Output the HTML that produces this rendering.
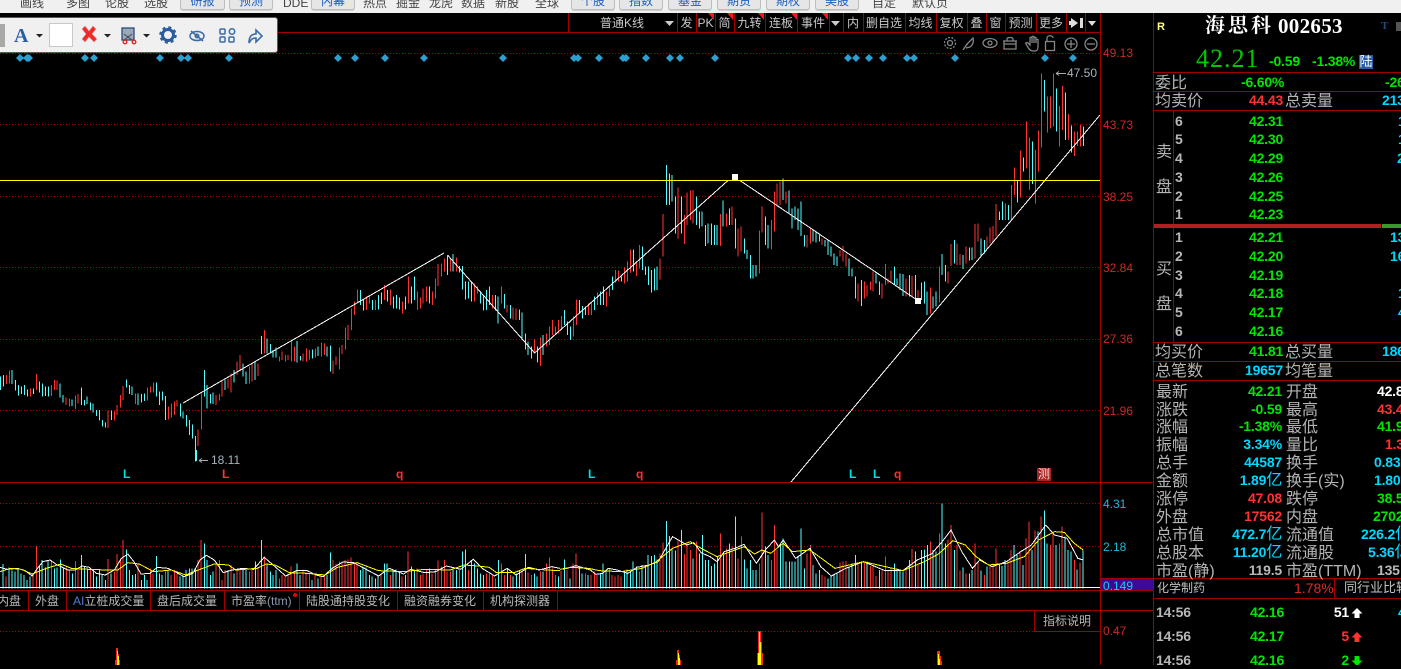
<!DOCTYPE html>
<html lang="zh">
<head>
<meta charset="utf-8">
<title>海思科 002653</title>
<style>
html,body{margin:0;padding:0;background:#000;}
body{position:relative;width:1401px;height:665px;overflow:hidden;font-family:"Liberation Sans","WenQuanYi Zen Hei",sans-serif;}
svg.a{position:absolute;left:0;top:0;}
i{position:absolute;font-style:normal;white-space:pre;}
.n{font:bold 14px/18px "Liberation Sans","WenQuanYi Zen Hei",sans-serif;letter-spacing:-.2px;}
.v{right:119px;}
.w{right:117px;}
.l{font:16px/18px "Liberation Sans","WenQuanYi Zen Hei",sans-serif;color:#b4b4b4;margin-top:2px;}
.n .l{margin-top:0;}
.s{font:12px/18px "Liberation Sans","WenQuanYi Zen Hei",sans-serif;color:#c0c0c0;}
.g{color:#00e600;}.r{color:#ff3232;}.c{color:#00d8ff;}.h{color:#b8b8b8;}.f{color:#fff;}
.y{font:12px/14px "Liberation Sans",sans-serif;color:#d02828;left:1103px;}
.m{font:bold 12px/14px "Liberation Sans",sans-serif;}
.e{font:12px/18px "Liberation Sans","WenQuanYi Zen Hei",sans-serif;color:#c8c8c8;top:14px;text-align:center;}
.b{position:absolute;top:-6px;height:14px;background:#e6e6e6;border:1px solid #bdbdbd;border-radius:3px;box-shadow:0 1px 0 #d0d0d0;font:12px/12px "Liberation Sans","WenQuanYi Zen Hei",sans-serif;color:#1a5fc0;text-align:center;}
.p{position:absolute;top:-3px;font:12px/12px "Liberation Sans","WenQuanYi Zen Hei",sans-serif;color:#444;white-space:pre;}
.tb{font:12px/20px "Liberation Sans","WenQuanYi Zen Hei",sans-serif;color:#b8b8b8;top:591px;}
</style>
</head>
<body>
<svg class="a" width="1401" height="665" viewBox="0 0 1401 665">
<rect x="0" y="13" width="1401" height="652" fill="#000"/>
<g stroke="#a00000" stroke-dasharray="1 2" shape-rendering="crispEdges" stroke-width="1">
<path d="M0 53.5H1100M0 124.5H1100M0 196.5H1100M0 267.5H1100M0 339.5H1100M0 410.5H1100M0 503.5H1100M0 546.5H1100M0 631.5H1100"/>
</g>

<g fill="none" shape-rendering="crispEdges">
<g transform="translate(0,240) scale(.35714,.33333)" stroke-width="2.8">
<path stroke="#ff3232" d="M18 405V432M26 392V430M85 445V470M102 402V450M144 435V468M152 420V450M160 422V450M185 472V495M194 475V500M211 467V507M219 462V490M303 512V564M320 515V542M328 495V525M337 465V503M345 438V480M379 460V492M413 442V482M421 440V458M430 427V458M472 500V538M480 490V533M488 485V525M496 480V500M555 568V618M564 460V568M605 465V495M614 462V482M622 425V470M639 415V445M647 400V458M664 365V405M672 345V395M698 380V430M706 370V425M723 370V408M740 270V340M782 350V365M790 335V360M799 345V365M807 345V360M816 305V365M824 320V365M849 340V365M858 325V365M866 330V358M883 325V352M900 307V350M908 310V345M933 362V402M941 350V375M950 322V388M958 315V342M967 262V328M975 255V300M984 205V270M992 185V225M1001 148V188M1026 170V210M1034 165V190M1051 180V210M1076 135V180M1093 148V195M1127 185V220M1144 110V190M1169 155V210M1177 172V205M1185 145V190M1194 140V185M1211 155V195M1219 115V175M1227 72V138M1236 70V110M1244 55V95M1261 55V95M1278 52V95M1329 130V185M1337 140V160M1379 165V205M1404 140V190M1420 195V218M1437 202V238M1445 205V240M1496 298V340M1513 292V378M1530 280V320M1538 260V315M1547 240V285M1555 260V285M1564 240V280"/>
<path stroke="#55ffff" d="M2 410V450M10 405V440M34 390V432M43 420V452M52 435V467M60 440V462M68 435V465M77 448V470M94 445V462M111 425V458M119 430V470M127 440V468M136 440V470M168 430V472M177 465V488M202 478V498M228 442V495M236 480V497M244 470V492M253 487V510M261 490V518M270 510V528M278 510V542M287 540V560M295 547V562M312 512V540M354 418V442M362 435V462M370 440V465M387 460V495M396 462V488M404 460V483M438 427V470M446 455V495M455 455V482M464 468V540M505 490V530M513 515V535M522 525V560M530 540V585M539 553V595M547 588V665M572 390V470M580 435V505M589 462V490M597 458V492M630 420V450M655 390V428M681 370V410M689 395V432M714 365V420M732 288V342M748 295V340M757 312V340M765 330V352M773 322V352M832 303V368M841 348V362M875 328V355M891 320V348M916 320V350M925 316V395M1009 150V195M1018 178V212M1043 180V210M1060 165V208M1068 158V192M1085 150V185M1102 170V205M1110 165V205M1118 172V208M1135 170V208M1152 140V190M1160 110V180M1202 140V190M1253 48V105M1269 42V95M1286 78V98M1295 78V148M1303 125V178M1312 125V175M1320 125V185M1345 155V190M1354 170V212M1362 150V210M1370 140V195M1387 165V212M1395 170V250M1412 162V205M1429 195V235M1454 208V240M1462 218V300M1471 280V328M1479 305V345M1488 320V355M1505 320V368M1521 285V345"/>
</g>
<g transform="translate(560,150) scale(.35714,.33333)" stroke-width="2.8">
<path stroke="#ff3232" d="M4 498V535M38 500V560M46 448V525M80 460V495M88 455V495M105 428V465M130 425V470M139 410V440M155 360V398M164 362V395M181 353V400M189 335V395M197 298V368M214 335V378M222 285V355M280 325V388M289 192V320M331 113V265M348 195V282M356 128V225M365 122V210M373 120V220M449 192V288M466 190V230M482 170V225M499 235V320M507 230V305M558 242V370M566 170V248M592 210V298M600 125V245M608 100V165M616 95V165M633 125V160M692 255V292M701 235V280M734 265V285M784 300V320M792 288V335M801 310V350M835 400V455M852 395V445M860 405V440M869 395V420M877 365V425M902 400V445M911 342V405M919 385V400M927 362V398M969 385V440M986 378V440M1003 420V445M1037 412V490M1062 350V458M1087 365V400M1095 282V348M1112 280V345M1120 312V345M1137 290V340M1162 222V325M1171 220V275M1196 260V295M1204 232V280M1213 228V280M1221 162V260"/>
<path stroke="#55ffff" d="M12 480V525M21 515V555M29 530V570M54 450V490M63 468V505M71 470V495M96 440V480M113 425V465M122 410V465M147 380V420M172 380V395M206 298V365M231 290V360M239 350V375M248 350V405M256 360V428M264 355V422M272 350V420M298 45V165M306 70V165M314 75V155M323 140V250M340 140V250M382 140V225M390 185V235M398 185V230M407 225V288M415 220V280M424 220V285M432 225V285M440 225V285M457 152V230M474 175V225M491 205V295M516 265V310M524 300V327M533 315V385M541 345V385M549 345V380M575 200V285M583 225V295M625 85V150M641 122V190M650 175V235M658 170V210M667 175V240M675 155V258M684 255V290M709 240V275M717 245V278M726 255V275M742 270V290M750 270V315M759 290V320M767 310V345M775 320V348M809 325V378M818 355V380M827 380V445M844 390V468M885 370V400M894 395V435M936 350V405M944 385V405M952 370V420M961 372V438M978 375V440M995 375V445M1012 398V450M1020 395V460M1028 425V495M1045 440V475M1053 425V470M1070 312V375M1079 345V395M1104 270V340M1129 315V357M1146 293V332M1154 292V330M1179 265V320M1188 270V310"/>
</g>
<g transform="translate(980,60) scale(.33333)" stroke-width="3">
<path stroke="#ff3232" d="M76 430V480M94 375V480M103 323V405M121 272V412M139 185V325M148 232V390M166 270V430M175 212V335M184 40V262M202 110V218M211 110V205M220 40V200M238 138V260M247 78V210M265 162V238M283 215V288M292 215V258M301 195V260"/>
<path stroke="#55ffff" d="M58 455V480M67 425V480M85 435V480M112 362V428M130 292V335M157 245V372M193 60V155M229 85V215M256 97V240M274 197V278M310 200V258"/>
</g>

<!-- volume bars -->
<g transform="translate(0,480) scale(.35714,.33333)" stroke-width="2.8">
<path stroke="#ff3232" d="M17 290V326M93 280V326M102 198V326M144 240V326M186 262V326M194 272V326M211 243V326M219 265V326M253 265V326M303 237V326M320 275V326M328 222V326M337 235V326M345 180V326M387 250V326M421 265V326M429 280V326M463 270V326M479 285V326M488 270V326M496 280V326M555 240V326M563 180V326M605 250V326M614 240V326M622 300V326M630 270V326M647 255V326M664 270V326M672 265V326M698 275V326M706 270V326M723 265V326M740 230V326M782 295V326M790 285V326M798 290V326M807 280V326M815 260V326M824 280V326M849 268V326M857 275V326M866 280V326M882 280V326M899 285V326M908 290V326M933 240V326M941 250V326M950 245V326M958 245V326M966 240V326M975 238V326M983 232V326M992 250V326M1000 255V326M1067 280V326M1093 285V326M1126 290V326M1143 215V326M1168 265V326M1177 285V326M1185 280V326M1194 270V326M1210 280V326M1219 270V326M1227 242V326M1236 260V326M1244 240V326M1252 275V326M1261 275V326M1286 270V326M1312 270V326M1362 280V326M1371 282V326M1379 285V326M1387 295V326M1404 250V326M1412 285V326M1429 285V326M1462 275V326M1479 278V326M1488 285V326M1513 275V326M1530 250V326M1538 232V326M1547 265V326M1555 285V326"/>
<path stroke="#55ffff" d="M8 252V326M25 262V326M34 272V326M42 275V326M50 265V326M59 280V326M67 285V326M76 300V326M84 290V326M110 260V326M118 240V326M127 262V326M135 240V326M152 265V326M160 262V326M169 238V326M178 265V326M203 280V326M228 225V326M236 260V326M245 265V326M262 270V326M270 290V326M278 270V326M286 285V326M295 300V326M311 280V326M354 208V326M362 270V326M371 285V326M379 282V326M396 300V326M404 285V326M412 300V326M438 228V326M446 280V326M454 285V326M471 270V326M504 290V326M513 290V326M521 270V326M530 265V326M538 265V326M547 265V326M572 190V326M580 240V326M589 285V326M597 275V326M639 270V326M655 280V326M681 270V326M689 270V326M715 245V326M732 180V326M748 250V326M757 275V326M765 285V326M773 270V326M832 250V326M840 285V326M874 300V326M891 295V326M916 285V326M925 218V326M1009 270V326M1017 262V326M1025 262V326M1034 285V326M1042 290V326M1051 295V326M1059 288V326M1076 250V326M1084 250V326M1101 268V326M1109 268V326M1118 275V326M1135 285V326M1152 260V326M1160 270V326M1202 265V326M1269 265V326M1278 270V326M1295 215V326M1303 208V326M1320 240V326M1329 250V326M1337 265V326M1346 280V326M1354 285V326M1396 240V326M1421 265V326M1437 290V326M1446 280V326M1454 270V326M1471 222V326M1496 280V326M1504 290V326M1521 275V326M1564 290V326"/>
</g>
<g transform="translate(560,480) scale(.35714,.33333)" stroke-width="2.8">
<path stroke="#ff3232" d="M3 272V326M20 270V326M37 250V326M45 220V326M71 280V326M87 285V326M96 275V326M104 285V326M138 265V326M146 285V326M154 290V326M163 285V326M171 290V326M222 275V326M280 220V326M289 188V326M331 180V326M348 222V326M356 190V326M365 210V326M382 185V326M449 160V326M466 205V326M482 200V326M499 235V326M508 170V326M558 250V326M566 98V326M592 240V326M600 135V326M608 210V326M692 220V326M701 195V326M734 285V326M742 290V326M784 248V326M792 245V326M801 243V326M835 250V326M852 245V326M869 258V326M877 260V326M885 288V326M902 272V326M911 230V326M919 270V326M927 262V326M969 270V326M986 207V326M1003 255V326M1037 185V326M1062 160V326M1087 178V326M1095 135V326M1112 195V326M1120 272V326M1137 280V326M1162 190V326M1171 245V326M1188 285V326M1204 258V326M1213 250V326M1221 205V326M1254 245V326M1263 210V326M1288 215V326M1305 175V326M1313 125V326M1330 152V326M1347 110V326M1373 195V326M1381 160V326M1398 190V326M1406 140V326M1440 240V326M1456 248V326"/>
<path stroke="#55ffff" d="M12 238V326M28 295V326M54 260V326M62 280V326M79 285V326M113 280V326M121 250V326M129 275V326M180 275V326M188 268V326M197 275V326M205 245V326M214 260V326M230 255V326M239 258V326M247 225V326M256 228V326M264 225V326M272 238V326M298 123V326M306 168V326M314 205V326M323 212V326M340 150V326M373 235V326M390 220V326M399 165V326M407 240V326M416 240V326M424 258V326M432 250V326M441 230V326M458 225V326M474 190V326M491 110V326M516 238V326M524 265V326M533 240V326M541 270V326M549 270V326M575 200V326M583 225V326M617 190V326M625 175V326M633 245V326M642 245V326M650 245V326M658 245V326M667 228V326M675 145V326M684 265V326M709 255V326M717 280V326M726 270V326M750 295V326M759 285V326M767 285V326M775 280V326M809 260V326M818 250V326M827 225V326M844 245V326M860 245V326M894 270V326M936 250V326M944 265V326M952 270V326M961 275V326M978 240V326M995 215V326M1012 210V326M1020 208V326M1029 195V326M1045 210V326M1053 215V326M1070 70V326M1079 190V326M1104 210V326M1129 262V326M1146 280V326M1154 270V326M1179 272V326M1196 260V326M1230 250V326M1238 258V326M1246 240V326M1271 195V326M1279 225V326M1296 255V326M1322 210V326M1339 155V326M1356 92V326M1364 190V326M1389 195V326M1414 170V326M1423 210V326M1431 215V326M1448 268V326M1465 212V326"/>
</g>
<path d="M0 587.5H1100" stroke="#fff" stroke-width="1"/>
</g>

<!-- MA lines -->
<g fill="none" stroke-width="1" shape-rendering="crispEdges">
<g transform="translate(0,480) scale(.35714,.33333)">
<polyline vector-effect="non-scaling-stroke" stroke="#fff" points="0,262 20,268 50,265 70,272 90,288 105,265 120,245 140,240 160,255 175,262 190,270 210,270 230,258 250,262 270,280 295,285 320,270 340,235 358,222 375,245 395,282 420,280 440,262 470,265 490,275 515,290 540,280 560,240 578,226 600,240 625,278 650,270 680,265 710,268 740,232 770,260 800,288 830,272 860,272 885,285 905,290 930,265 960,246 990,248 1020,265 1060,288 1090,265 1130,282 1150,268 1190,278 1220,275 1250,258 1290,268 1325,238 1350,265 1385,288 1420,265 1445,285 1480,262 1510,270 1545,260 1568,265"/>
<polyline vector-effect="non-scaling-stroke" stroke="#ffff00" points="0,275 30,265 60,268 90,282 130,265 170,252 200,265 250,268 300,270 330,270 358,248 390,252 430,275 480,270 520,285 550,272 600,252 640,255 660,270 720,265 745,252 770,255 810,278 860,280 910,285 945,262 1000,248 1060,272 1130,275 1190,268 1260,270 1300,255 1340,258 1370,262 1390,278 1440,278 1470,265 1530,270 1568,272"/>
</g>
<g transform="translate(560,480) scale(.35714,.33333)">
<polyline vector-effect="non-scaling-stroke" stroke="#fff" points="0,268 20,265 45,257 85,270 100,283 120,280 135,265 160,270 190,280 215,262 250,255 275,245 315,170 335,182 355,195 375,188 395,218 420,230 440,245 460,215 490,205 515,193 550,250 575,210 600,180 612,200 625,180 660,235 700,205 730,260 760,288 800,265 850,245 910,272 960,272 1000,240 1040,222 1070,185 1095,150 1125,215 1155,265 1175,240 1210,260 1250,245 1290,215 1320,195 1360,135 1385,165 1420,175 1450,235 1465,240"/>
<polyline vector-effect="non-scaling-stroke" stroke="#ffff00" points="0,268 30,262 80,265 110,272 170,275 230,265 270,245 315,205 365,185 395,205 440,230 515,200 545,222 565,210 590,220 625,190 650,215 700,210 770,265 850,245 960,272 1020,245 1060,222 1100,182 1135,195 1165,230 1200,255 1250,250 1300,230 1340,180 1385,155 1412,157 1440,190 1465,210"/>
</g>
</g>

<!-- drawn lines -->
<path d="M183 403L444 253M447.500 255L534.600 353L728 180.500M740 180.500L917 300M791 482L1100 115" fill="none" stroke="#fff" stroke-width="1" shape-rendering="crispEdges"/>
<path d="M0 180.500H1100" stroke="#ffff00" stroke-width="1" shape-rendering="crispEdges"/>
<rect x="732" y="174" width="6" height="6" fill="#fff"/>
<rect x="915" y="298" width="6" height="6" fill="#fff"/>

<!-- diamonds -->
<g fill="#2b9fcf">
<path d="M20 54l4 4-4 4-4-4zM27 54l4 4-4 4-4-4zM29 54l4 4-4 4-4-4zM85 54l4 4-4 4-4-4zM94 54l4 4-4 4-4-4zM160 54l4 4-4 4-4-4zM181 54l4 4-4 4-4-4zM188 54l4 4-4 4-4-4zM229 54l4 4-4 4-4-4zM338 54l4 4-4 4-4-4zM355 54l4 4-4 4-4-4zM385 54l4 4-4 4-4-4zM424 54l4 4-4 4-4-4zM503 54l4 4-4 4-4-4zM574 54l4 4-4 4-4-4zM578 54l4 4-4 4-4-4zM599 54l4 4-4 4-4-4zM623 54l4 4-4 4-4-4zM626 54l4 4-4 4-4-4zM646 54l4 4-4 4-4-4zM670 54l4 4-4 4-4-4zM680 54l4 4-4 4-4-4zM715 54l4 4-4 4-4-4zM848 54l4 4-4 4-4-4zM856 54l4 4-4 4-4-4zM869 54l4 4-4 4-4-4zM883 54l4 4-4 4-4-4zM907 54l4 4-4 4-4-4zM914 54l4 4-4 4-4-4zM955 54l4 4-4 4-4-4zM1045 54l4 4-4 4-4-4zM1073 54l4 4-4 4-4-4z"/>
</g>

<!-- price arrows -->
<path d="M208 460.500H199M199 460.500l3-2M199 460.500l3 2" stroke="#a8a8a8" fill="none"/>
<path d="M196.500 450V461" stroke="#55ffff"/>
<path d="M1066 73.500H1056M1056 73.500l3-2M1056 73.500l3 2" stroke="#a8a8a8" fill="none"/>

<!-- spikes -->
<g shape-rendering="crispEdges">
<path d="M116 648h2v6h1v6h1v5h-5v-5h1zM677 650h2v5h1v5h1v5h-5v-5h1zM758 631h3v11h1v11h1v12h-6v-12h1z" fill="#ff2020"/>
<path d="M937 651h3v5h1v5h1v4h-5v-4h0z" fill="#ff2020"/>
<path d="M117 651h1v5h1v9h-2zM678 653h1v5h1v7h-2zM759 632h1v10h1v23h-3v-12h1zM938 654h1v5h1v6h-2z" fill="#ffff00"/>
</g>

<!-- frame lines -->
<g stroke="#a00000" stroke-width="1" shape-rendering="crispEdges" fill="none">
<path d="M0 32.500H1100M0 482.500H1153M0 590.500H1153M0 610.500H1153M1100.500 13V665M1153.500 13V665"/>
<path d="M1153 72.500H1401M1153 91.500H1401M1153 110.500H1401M1153 342.500H1401M1153 361.500H1401M1153 380.500H1401M1153 578.500H1401M1153 598.500H1401M1100 578.500H1153M1173.500 110V224M1173.500 228V342M1334.500 578V598"/>
<path d="M568.500 13V32M677.500 13V32M696.500 13V32M715.500 13V32M734.500 13V32M765.500 13V32M797.500 13V32M829.500 13V32M843.500 13V32M863.500 13V32M905.500 13V32M936.500 13V32M967.500 13V32M986.500 13V32M1005.500 13V32M1036.500 13V32M1066.500 13V32M1085.500 13V32"/>
<path d="M28.500 591V610M66.500 591V610M150.500 591V610M224.500 591V610M299.500 591V610M397.500 591V610M483.500 591V610M557.500 591V610M1034.500 611V631.500H1100"/>
</g>
<rect x="1101" y="579" width="52" height="11" fill="#3c0a96"/>
<rect x="1154" y="224" width="227" height="4" fill="#b02020"/>
<rect x="1382" y="224" width="19" height="4" fill="#3a9a30"/>
<rect x="1359" y="55" width="14" height="14" fill="#2b5aa8"/>

<!-- corner triangles -->
<path d="M708 13h6v7zM727 13h6v7zM758 13h6v7zM791 13h6v7zM822 13h6v7z" fill="#f01818"/>
<!-- toolbar arrows -->
<path d="M665 21h9l-4.500 5z" fill="#ccc"/>
<path d="M831 21h9l-4.500 5z" fill="#ccc"/>
<path d="M1071 18l7 5-7 5v-3h-2v-4h2zM1080 18h3v10h-3z" fill="#ddd"/>
<path d="M1088 21h8l-4 5z" fill="#ddd"/>

<!-- chart icons -->
<g fill="none" stroke="#858585" stroke-width="1.300">
<circle cx="950" cy="43" r="2.500"/><circle cx="950" cy="43" r="5.500" stroke-dasharray="2 1.400"/>
<path d="M963 50l4-6 6-6c1 3 0 7-3 9l-4 1M963 50l5-7" />
<ellipse cx="990" cy="43" rx="7" ry="4.500"/><circle cx="990" cy="43" r="2"/>
<path d="M1004 41h12v8h-12zM1003 41h14M1007 41v-2c0-2 6-2 6 0v2M1004 44h12"/>
<path d="M1026 44l3 5c1 1 2 2 4 2h2c2 0 3-2 3-4v-7c0-1-2-1-2 0v3M1036 43v-5c0-1-2-1-2 0v5M1034 43v-6c0-1-2-1-2 0v6M1032 43v-5c0-1-2-1-2 0v7l-2-2c-1-1-3 0-2 1"/>
<rect x="1045.500" y="41.500" width="9" height="9"/><path d="M1047 41v-3c0-3 6-3 6 0"/>
<circle cx="1071" cy="44" r="6"/><path d="M1067 44h8M1071 40v8"/>
<circle cx="1091" cy="44" r="6"/><path d="M1087 44h8"/>
</g>

<!-- tick arrows -->
<path d="M1357 608l5.500 5.500h-3v4.500h-5v-4.500h-3z" fill="#fff"/>
<path d="M1357 632l5.500 5.500h-3v4.500h-5v-4.500h-3z" fill="#ff3232"/>
<path d="M1354.500 656h5v4.500h3l-5.500 5.500-5.500-5.500h3z" fill="#00e600"/>
</svg>

<!-- top menu bar -->
<div style="position:absolute;left:0;top:0;width:1401px;height:13px;background:#f0f0f0;overflow:hidden;">
<span class="p" style="left:20px">画线</span><span class="p" style="left:66px">多图</span><span class="p" style="left:105px">论股</span><span class="p" style="left:144px">选股</span>
<span class="b" style="left:180px;width:43px">研报</span><span class="b" style="left:229px;width:42px">预测</span>
<span class="p" style="left:283px">DDE</span>
<span class="b" style="left:311px;width:42px">内幕</span>
<span class="p" style="left:363px">热点</span><span class="p" style="left:396px">掘金</span><span class="p" style="left:429px">龙虎</span><span class="p" style="left:461px">数据</span><span class="p" style="left:495px">新股</span><span class="p" style="left:535px">全球</span>
<span class="b" style="left:571px;width:42px">个股</span><span class="b" style="left:619px;width:42px">指数</span><span class="b" style="left:668px;width:42px">基金</span><span class="b" style="left:717px;width:42px">期货</span><span class="b" style="left:766px;width:42px">期权</span><span class="b" style="left:815px;width:42px">美股</span>
<span class="p" style="left:872px">自定</span><span class="p" style="left:912px">默认页</span>
</div>

<!-- floating toolbar -->
<div style="position:absolute;left:-3px;top:17px;width:279px;height:34px;background:#f0f0f0;border:1px solid #5a5a5a;border-radius:3px;"></div>
<svg class="a" width="280" height="56" viewBox="0 0 280 56">
<rect x="0" y="24" width="5" height="23" fill="#a8a8a8"/>
<text x="14" y="42" font-family="Liberation Serif" font-weight="bold" font-size="20" fill="#2a5ca8">A</text>
<path d="M36 34h7l-3.500 3.500zM104 34h7l-3.500 3.500zM143 34h7l-3.500 3.500z" fill="#222"/>
<rect x="49.500" y="23.500" width="23" height="23" fill="#fff" stroke="#c8c8c8"/>
<path d="M82 29l3-3 4 5 4-5 3 3-4 5 5 5-3 3-5-5-4 5-3-3 4-5z" fill="#f02828" stroke="#d8a0a0" stroke-width=".6"/>
<rect x="122" y="28" width="12" height="12" fill="#9aa8b8" stroke="#2a4a7a" stroke-width="1.300"/>
<path d="M124 34l8 6M132 34l-8 6" stroke="#445" stroke-width="1"/>
<circle cx="125" cy="42" r="1.800" fill="none" stroke="#e02828" stroke-width="1.400"/><circle cx="134" cy="42" r="1.800" fill="none" stroke="#e02828" stroke-width="1.400"/>
<circle cx="168" cy="35" r="5.500" fill="none" stroke="#2a5c9e" stroke-width="3"/>
<circle cx="168" cy="35" r="7.500" fill="none" stroke="#2a5c9e" stroke-width="2.500" stroke-dasharray="3 2.900"/>
<g fill="none" stroke="#3a6aa8" stroke-width="1.500">
<ellipse cx="197" cy="36" rx="7" ry="4.500"/><circle cx="197" cy="36" r="1.800"/><path d="M191 31l12 10"/>
<rect x="220" y="29" width="5" height="5" rx="1"/><circle cx="232" cy="31.500" r="2.700"/><rect x="220" y="37" width="5" height="5" rx="1"/><rect x="229" y="37" width="5" height="5" rx="1"/>
<path d="M249 43c0-6 2-9 7-9v-4l6 6-6 6v-4c-3 0-5 1-7 5z" stroke-width="1.600"/>
</g>
</svg>

<!-- cell row -->
<i class="e" style="left:600px;width:44px">普通K线</i>
<i class="e" style="left:677px;width:19px">发</i><i class="e" style="left:696px;width:19px">PK</i><i class="e" style="left:715px;width:19px">简</i><i class="e" style="left:734px;width:31px">九转</i><i class="e" style="left:765px;width:32px">连板</i><i class="e" style="left:797px;width:32px">事件</i>
<i class="e" style="left:843px;width:20px">内</i><i class="e" style="left:863px;width:42px">删自选</i><i class="e" style="left:905px;width:31px">均线</i><i class="e" style="left:936px;width:31px">复权</i><i class="e" style="left:967px;width:19px">叠</i><i class="e" style="left:986px;width:19px">窗</i><i class="e" style="left:1005px;width:31px">预测</i><i class="e" style="left:1036px;width:30px">更多</i>

<!-- axis labels -->
<i class="y" style="top:46px">49.13</i><i class="y" style="top:118px">43.73</i><i class="y" style="top:190px">38.25</i><i class="y" style="top:261px">32.84</i><i class="y" style="top:332px">27.36</i><i class="y" style="top:404px">21.96</i>
<i class="y" style="top:497px;color:#20b8d8">4.31</i><i class="y" style="top:540px;color:#20b8d8">2.18</i><i class="y" style="top:579px;color:#20c8e8">0.149</i><i class="y" style="top:624px">0.47</i>

<!-- chart annotations -->
<i style="left:211px;top:453px;font:12px/14px 'Liberation Sans',sans-serif;color:#a8b4bc">18.11</i>
<i style="left:1067px;top:66px;font:12px/14px 'Liberation Sans',sans-serif;color:#a8b4bc">47.50</i>
<i class="m" style="left:123px;top:467px;color:#00e0e0">L</i><i class="m" style="left:222px;top:467px;color:#ff3232">L</i><i class="m" style="left:396px;top:467px;color:#ff3232">q</i><i class="m" style="left:588px;top:467px;color:#00e0e0">L</i><i class="m" style="left:636px;top:467px;color:#ff3232">q</i><i class="m" style="left:849px;top:467px;color:#00e0e0">L</i><i class="m" style="left:873px;top:467px;color:#00e0e0">L</i><i class="m" style="left:894px;top:467px;color:#ff3232">q</i>
<i style="left:1037px;top:468px;width:14px;height:13px;background:#a82020;color:#f0e0e0;font:12px/13px 'Liberation Sans','WenQuanYi Zen Hei',sans-serif;text-align:center">测</i>

<!-- tabs -->
<i class="tb" style="left:-3px">内盘</i><i class="tb" style="left:35px">外盘</i><i class="tb" style="left:73px"><span style="color:#4a80d0">AI</span>立桩成交量</i><i class="tb" style="left:157px">盘后成交量</i><i class="tb" style="left:231px">市盈率<span style="color:#8a9ab0">(ttm)</span></i><i class="tb" style="left:306px">陆股通持股变化</i><i class="tb" style="left:404px">融资融券变化</i><i class="tb" style="left:490px">机构探测器</i>
<i style="left:293px;top:593px;width:4px;height:4px;border-radius:2px;background:#f00000"></i>
<i class="tb" style="left:1043px;top:611px">指标说明</i>

<!-- right panel header -->
<i style="left:1157px;top:20px;font:bold 11px/14px 'Liberation Sans',sans-serif;color:#ffff80">R</i>
<i style="left:1205px;top:14px;font:bold 20px/24px 'Liberation Serif','Noto Serif CJK SC',serif;color:#fff;letter-spacing:3px">海思科</i>
<i style="left:1278px;top:14px;font:bold 21px/24px 'Liberation Serif',serif;color:#fff;letter-spacing:.3px">002653</i>
<i style="left:1381px;top:19px;font:bold 11px/14px 'Liberation Serif',serif;color:#234a80">T</i>
<i style="left:1396px;top:22px;width:5px;height:9px;background:#555"></i>
<i style="left:1196px;top:44px;font:26px/30px 'Liberation Serif',serif;color:#00c800;letter-spacing:1px">42.21</i>
<i class="n g" style="left:1269px;top:52px">-0.59</i><i class="n g" style="left:1312px;top:52px">-1.38%</i>
<i style="left:1359px;top:55px;width:14px;height:14px;color:#fff;font:13px/14px 'Liberation Sans','WenQuanYi Zen Hei',sans-serif;text-align:center">陆</i>

<i class="l" style="left:1155px;top:73px">委比</i><i class="n g" style="left:1241px;top:73px">-6.60%</i><i class="n g" style="left:1385px;top:73px">-26</i>
<i class="l" style="left:1155px;top:91px">均卖价</i><i class="n r" style="left:1249px;top:91px">44.43</i><i class="l" style="left:1285px;top:91px">总卖量</i><i class="n c" style="left:1382px;top:91px">213</i>

<i class="l" style="left:1156px;top:142px">卖</i><i class="l" style="left:1156px;top:177px">盘</i>
<i class="n h" style="left:1175px;top:112px">6</i><i class="n g" style="left:1249px;top:112px">42.31</i><i class="n c" style="left:1398px;top:112px">1</i>
<i class="n h" style="left:1175px;top:130px">5</i><i class="n g" style="left:1249px;top:130px">42.30</i><i class="n c" style="left:1398px;top:130px">1</i>
<i class="n h" style="left:1175px;top:149px">4</i><i class="n g" style="left:1249px;top:149px">42.29</i><i class="n c" style="left:1397px;top:149px">2</i>
<i class="n h" style="left:1175px;top:168px">3</i><i class="n g" style="left:1249px;top:168px">42.26</i>
<i class="n h" style="left:1175px;top:187px">2</i><i class="n g" style="left:1249px;top:187px">42.25</i>
<i class="n h" style="left:1175px;top:205px">1</i><i class="n g" style="left:1249px;top:205px">42.23</i>

<i class="l" style="left:1156px;top:259px">买</i><i class="l" style="left:1156px;top:294px">盘</i>
<i class="n h" style="left:1175px;top:228px">1</i><i class="n g" style="left:1249px;top:228px">42.21</i><i class="n c" style="left:1390px;top:228px">13</i>
<i class="n h" style="left:1175px;top:247px">2</i><i class="n g" style="left:1249px;top:247px">42.20</i><i class="n c" style="left:1390px;top:247px">16</i>
<i class="n h" style="left:1175px;top:266px">3</i><i class="n g" style="left:1249px;top:266px">42.19</i>
<i class="n h" style="left:1175px;top:284px">4</i><i class="n g" style="left:1249px;top:284px">42.18</i><i class="n c" style="left:1398px;top:284px">1</i>
<i class="n h" style="left:1175px;top:303px">5</i><i class="n g" style="left:1249px;top:303px">42.17</i><i class="n c" style="left:1398px;top:303px">4</i>
<i class="n h" style="left:1175px;top:322px">6</i><i class="n g" style="left:1249px;top:322px">42.16</i>

<i class="l" style="left:1155px;top:342px">均买价</i><i class="n g" style="left:1249px;top:342px">41.81</i><i class="l" style="left:1285px;top:342px">总买量</i><i class="n c" style="left:1382px;top:342px">186</i>
<i class="l" style="left:1155px;top:361px">总笔数</i><i class="n c" style="left:1245px;top:361px">19657</i><i class="l" style="left:1285px;top:361px">均笔量</i>

<i class="l" style="left:1156px;top:382px">最新</i><i class="n g v" style="top:382px">42.21</i><i class="l" style="left:1286px;top:382px">开盘</i><i class="n f" style="left:1377px;top:382px">42.8</i>
<i class="l" style="left:1156px;top:400px">涨跌</i><i class="n g v" style="top:400px">-0.59</i><i class="l" style="left:1286px;top:400px">最高</i><i class="n r" style="left:1377px;top:400px">43.4</i>
<i class="l" style="left:1156px;top:417px">涨幅</i><i class="n g v" style="top:417px">-1.38%</i><i class="l" style="left:1286px;top:417px">最低</i><i class="n g" style="left:1377px;top:417px">41.9</i>
<i class="l" style="left:1156px;top:435px">振幅</i><i class="n c v" style="top:435px">3.34%</i><i class="l" style="left:1286px;top:435px">量比</i><i class="n r" style="left:1385px;top:435px">1.3</i>
<i class="l" style="left:1156px;top:453px">总手</i><i class="n c v" style="top:453px">44587</i><i class="l" style="left:1286px;top:453px">换手</i><i class="n c" style="left:1374px;top:453px">0.83</i>
<i class="l" style="left:1156px;top:471px">金额</i><i class="n c v" style="top:471px">1.89<span class="l" style="color:#00d8ff;font-weight:normal">亿</span></i><i class="l" style="left:1286px;top:471px">换手(实)</i><i class="n c" style="left:1374px;top:471px">1.80</i>
<i class="l" style="left:1156px;top:489px">涨停</i><i class="n r v" style="top:489px">47.08</i><i class="l" style="left:1286px;top:489px">跌停</i><i class="n g" style="left:1377px;top:489px">38.5</i>
<i class="l" style="left:1156px;top:507px">外盘</i><i class="n r v" style="top:507px">17562</i><i class="l" style="left:1286px;top:507px">内盘</i><i class="n g" style="left:1373px;top:507px">2702</i>
<i class="l" style="left:1156px;top:525px">总市值</i><i class="n c v" style="top:525px">472.7<span class="l" style="color:#00d8ff;font-weight:normal">亿</span></i><i class="l" style="left:1286px;top:525px">流通值</i><i class="n c" style="left:1361px;top:525px">226.2<span class="l" style="color:#00d8ff;font-weight:normal">亿</span></i>
<i class="l" style="left:1156px;top:543px">总股本</i><i class="n c v" style="top:543px">11.20<span class="l" style="color:#00d8ff;font-weight:normal">亿</span></i><i class="l" style="left:1286px;top:543px">流通股</i><i class="n c" style="left:1368px;top:543px">5.36<span class="l" style="color:#00d8ff;font-weight:normal">亿</span></i>
<i class="l" style="left:1156px;top:561px">市盈(静)</i><i class="n h v" style="top:561px">119.5</i><i class="l" style="left:1286px;top:561px">市盈(TTM)</i><i class="n h" style="left:1377px;top:561px">135</i>

<i class="s" style="left:1157px;top:579px">化学制药</i><i class="s" style="left:1294px;top:579px;color:#e02828;font-size:14px">1.78%</i><i class="s" style="left:1344px;top:579px;font-size:13px">同行业比较</i>

<i class="n h" style="left:1156px;top:603px">14:56</i><i class="n g" style="left:1250px;top:603px">42.16</i><i class="n f" style="right:52px;top:603px">51</i><i class="n c" style="left:1398px;top:603px">4</i>
<i class="n h" style="left:1156px;top:627px">14:56</i><i class="n g" style="left:1250px;top:627px">42.17</i><i class="n r" style="right:52px;top:627px">5</i>
<i class="n h" style="left:1156px;top:651px">14:56</i><i class="n g" style="left:1250px;top:651px">42.16</i><i class="n g" style="right:52px;top:651px">2</i>
</body>
</html>
